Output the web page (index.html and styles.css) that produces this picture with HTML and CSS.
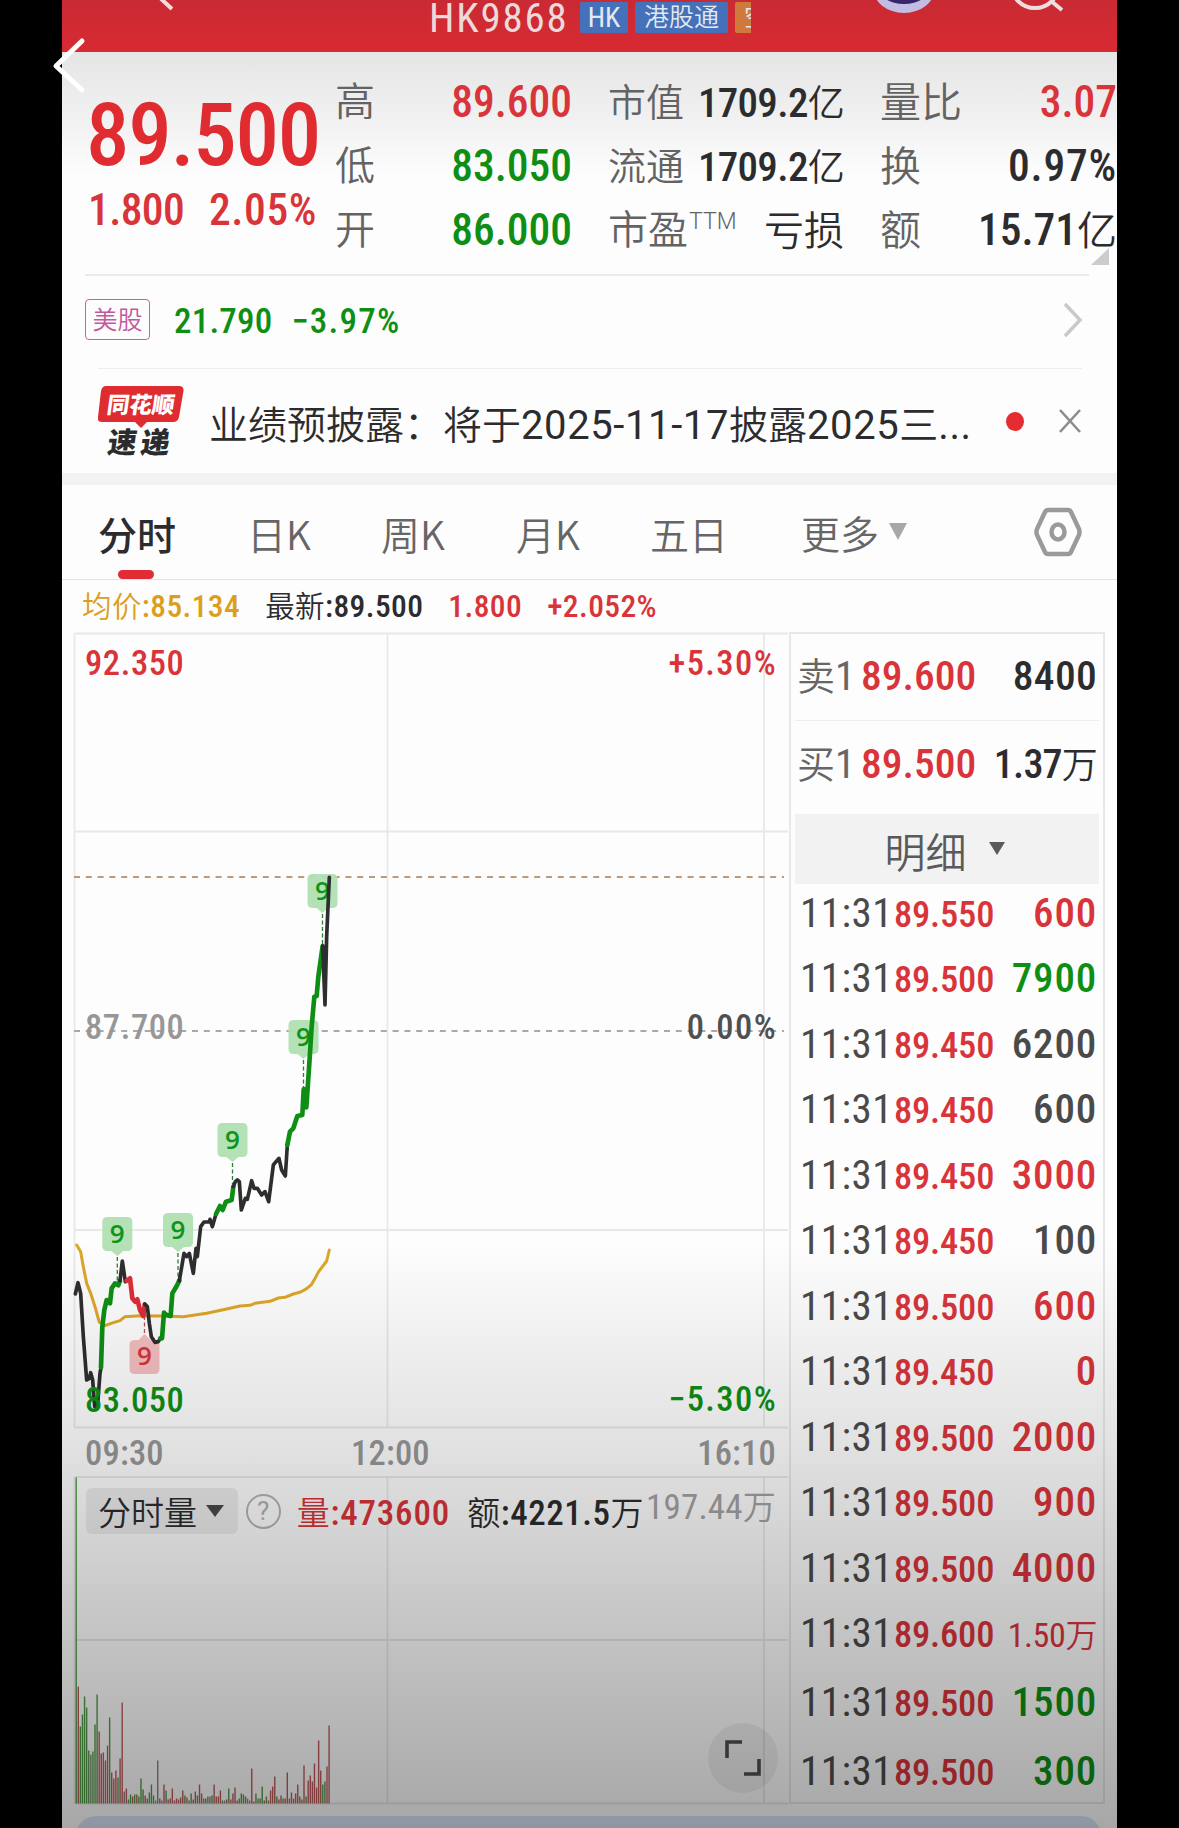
FILE: index.html
```html
<!DOCTYPE html>
<html lang="zh-CN">
<head>
    <meta charset="utf-8">
    <title>HK9868</title>
    <meta name="viewport" content="width=device-width, initial-scale=1.0">
    <link rel="stylesheet" href="styles.css">
</head>
<body>
    <svg class="page-back" width="44" height="60" viewBox="0 0 44 60"><path d="M34 6 L8 31 L34 55"/></svg>

    <div class="screen">
        <header>
            <svg class="nav-back" width="30" height="14" viewBox="0 0 30 14"><path d="M12 -4 L26 9"/></svg>
            <h1>HK9868</h1>
            <div class="tags">
                <span class="tag">HK</span>
                <span class="tag tag-connect">港股通</span>
                <span class="tag tag-short">空</span>
            </div>
            <svg class="nav-icons" width="200" height="16" viewBox="0 0 200 16">
                <ellipse cx="31" cy="-12" rx="31" ry="25" fill="#c3bde4"/>
                <ellipse cx="31" cy="-13" rx="26" ry="17" fill="#35276b"/>
                <circle cx="162" cy="-16" r="24" fill="none" stroke="#f0dede" stroke-width="4"/>
                <path d="M178 1 L189 10" stroke="#f0dede" stroke-width="4"/>
            </svg>
        </header>

        <div class="quote">
            <div class="price-block">
                <div class="price">89.500</div>
                <div class="change"><span>1.800</span><span class="pct">2.05%</span></div>
            </div>
            <div class="stats stats-range">
                <div class="stat"><span class="label">高</span><span class="num red">89.600</span></div>
                <div class="stat"><span class="label">低</span><span class="num green">83.050</span></div>
                <div class="stat"><span class="label">开</span><span class="num green">86.000</span></div>
            </div>
            <div class="stats stats-cap">
                <div class="stat"><span class="label small">市值</span><span class="num cap">1709.2<i>亿</i></span></div>
                <div class="stat"><span class="label small">流通</span><span class="num cap">1709.2<i>亿</i></span></div>
                <div class="stat"><span class="label">市盈<sup>TTM</sup></span><span class="num"><i>亏损</i></span></div>
            </div>
            <div class="stats stats-turnover">
                <div class="stat"><span class="label">量比</span><span class="num red">3.07</span></div>
                <div class="stat"><span class="label">换</span><span class="num pct">0.97%</span></div>
                <div class="stat"><span class="label">额</span><span class="num">15.71<i>亿</i></span></div>
            </div>
            <svg class="corner" width="18" height="17" viewBox="0 0 18 17"><path d="M18 0 V17 H0 Z"/></svg>
        </div>

        <div class="us-row">
            <span class="us-tag">美股</span>
            <span class="us-price">21.790</span>
            <span class="us-change">−3.97%</span>
            <svg class="us-arrow" width="20" height="40" viewBox="0 0 20 40"><path d="M2 4 L17 20 L2 36"/></svg>
        </div>

        <div class="news-row">
            <div class="news-logo">
                <svg width="88" height="44" viewBox="0 0 88 44"><path d="M8 0 H81 Q86 0 85.500 5 L81 31 Q80 36 75 36 H49 L43 42 L37 36 H4 Q-1 36 0 31 L3 5 Q4 0 8 0 Z"/></svg>
                <span class="logo-top">同花顺</span>
                <span class="logo-bottom">速递</span>
            </div>
            <div class="news-title">业绩预披露：将于<span>2025-11-17</span>披露<span>2025</span>三<span>...</span></div>
            <span class="dot"></span>
            <svg class="close" width="24" height="24" viewBox="0 0 24 24"><path d="M2 1 L22 23 M22 1 L2 23"/></svg>
        </div>

        <nav class="tabs">
            <span class="tab active">分时</span>
            <span class="tab">日K</span>
            <span class="tab">周K</span>
            <span class="tab">月K</span>
            <span class="tab">五日</span>
            <span class="tab more">更多<svg width="22" height="20" viewBox="0 0 22 20"><path d="M2 1 H20 L11 18 Z"/></svg></span>
            <svg class="settings" width="48" height="50" viewBox="0 0 48 50">
                <path d="M14 3 H34 Q36 3 37 5 L45 22 Q46 25 45 28 L37 45 Q36 47 34 47 H14 Q12 47 11 45 L3 28 Q2 25 3 22 L11 5 Q12 3 14 3 Z"/>
                <ellipse cx="24" cy="25" rx="6.500" ry="7.500"/>
            </svg>
        </nav>

        <div class="info-row">
            <span class="avg"><i>均价</i>:85.134</span>
            <span><i>最新</i>:89.500</span>
            <span class="red">1.800</span>
            <span class="red">+2.052%</span>
        </div>

        <div class="main">
            <div class="charts">
                <svg id="chart" width="727" height="1185" viewBox="62 630 727 1185">
                    <g class="grid">
                        <path d="M74.500 633.500 H788 M74.500 831.500 H788 M74.500 1230 H788 M74.500 1427.500 H788 M74.500 1477 H788 M74.500 1640 H788 M74.500 1803.500 H788"/>
                        <path d="M74.500 633 V1428 M387.500 633 V1428 M764 633 V1428 M387.500 1477 V1803 M764 1477 V1803 M74.500 1477 V1803"/>
                    </g>
                    <path class="last-line" d="M74 877 H784"/>
                    <path class="zero-line" d="M74 1031 H784"/>

                    <g class="marks" id="marks"></g>

                    <g class="lines" transform="translate(60 1160) scale(.33333)">
                        <polyline class="avg-line" points="50,255 62,275 70,320 80,370 92,400 105,440 118,487 135,497 160,488 180,482 195,470 240,467 300,468 370,470 400,466 440,460 500,447 540,438 570,436 585,430 630,424 655,414 675,412 700,402 722,396 740,386 755,373 768,350 776,335 800,303 808,270"/>
                        <polyline points="46,402 54,368 62,400 70,530 80,660 88,655 92,638 98,660 104,740 112,745 120,640 123,622"/>
                        <polyline class="up" points="123,622 127,500 133,450 140,420 150,430 155,385 165,370 175,376 180,362"/>
                        <polyline points="180,362 187,303 196,365 200,362"/>
                        <polyline class="down" points="200,362 210,355 217,415 225,425 232,418 240,450 250,468 254,434"/>
                        <polyline points="254,432 262,440 268,490 274,530 285,547 295,545 301,535"/>
                        <polyline class="up" points="301,535 306,535 312,458 320,465 332,468 337,400 350,378 358,362"/>
                        <polyline points="358,362 372,280 380,290 388,280 400,340 408,265 412,290 422,200 432,186 447,186 450,178 457,200 468,162"/>
                        <polyline class="up" points="468,162 480,138 488,150 498,125 515,120 520,80"/>
                        <polyline points="520,80 526,65 532,60 538,65 544,150 556,115 562,118 575,62 582,85 592,85 605,105 615,95 626,125 640,15 648,5 657,-5 665,30 676,48 682,-45"/>
                        <polyline class="up" points="682,-45 690,-85 700,-95 712,-132 727,-135 731,-212 736,-212 739,-158 748,-290 755,-400 763,-490 770,-492 775,-550 788,-642"/>
                        <polyline points="788,-642 795,-465 800,-670 808,-848"/>
                    </g>
                    <g id="volume"></g>

                    <g class="labels">
                        <text class="red" x="85" y="674.500">92.350</text>
                        <text class="red pct" x="777" y="674.500" text-anchor="end">+5.30%</text>
                        <text class="mid" x="85" y="1039">87.700</text>
                        <text class="dark pct" x="777" y="1039" text-anchor="end">0.00%</text>
                        <text class="green" x="85" y="1412">83.050</text>
                        <text class="green pct" x="777" y="1411" text-anchor="end">−5.30%</text>
                        <text class="time" x="85" y="1465">09:30</text>
                        <text class="time" x="351" y="1465">12:00</text>
                        <text class="time" x="776" y="1465" text-anchor="end">16:10</text>
                    </g>
                </svg>
                <div class="vol-bar">
                    <span class="vol-select"><i>分时量</i><svg width="20" height="14" viewBox="0 0 20 14"><path d="M1 1 H19 L10 13 Z"/></svg></span>
                    <span class="help">?</span>
                    <span class="red vol"><i>量</i>:473600</span>
                    <span class="amount"><i>额</i>:4221.5<i>万</i></span>
                    <span class="vol-max">197.44<i>万</i></span>
                </div>
                <div class="expand"><svg width="36" height="36" viewBox="0 0 36 36"><path d="M2 18 V2 H17 M34 19 V34 H19"/></svg></div>
            </div>

            <div class="book">
                <div class="book-row"><span class="side">卖<b>1</b></span><span class="book-price">89.600</span><span class="book-qty">8400</span></div>
                <div class="book-row"><span class="side">买<b>1</b></span><span class="book-price">89.500</span><span class="book-qty wan">1.37<i>万</i></span></div>
                <div class="detail-head">明细<svg width="16" height="13" viewBox="0 0 16 13"><path d="M0 0 H16 L8 13 Z"/></svg></div>
                <div class="ticks" id="ticks"></div>
            </div>
        </div>

        <div class="bottom-bar"></div>
        <div class="shade"></div>
    </div>

    <script>
        // price, quantity, direction
        const ticks = [
            ['89.550', '600', 'red'],
            ['89.500', '7900', 'green'],
            ['89.450', '6200', ''],
            ['89.450', '600', ''],
            ['89.450', '3000', 'red'],
            ['89.450', '100', ''],
            ['89.500', '600', 'red'],
            ['89.450', '0', 'red'],
            ['89.500', '2000', 'red'],
            ['89.500', '900', 'red'],
            ['89.500', '4000', 'red'],
            ['89.600', '1.50<i>万</i>', 'red small'],
            ['89.500', '1500', 'green'],
            ['89.500', '300', 'green']
        ];
        document.getElementById('ticks').innerHTML = ticks.map(t =>
            `<div class="tick"><span class="tick-time">11:31</span><span class="tick-price">${t[0]}</span><span class="tick-qty ${t[2]}">${t[1]}</span></div>`
        ).join('');

        // Signal marks: x, top of the box, end of the stem
        const marks = [
            [117.3, 1217, 1281], [178, 1213, 1282], [232.500, 1123, 1184],
            [303.500, 1020, 1090], [322.500, 874, 945]
        ];
        let markHtml = marks.map(([x, y, end]) => `
            <path class="stem" d="M${x} ${y + 40} V${end}"/>
            <path class="mark" d="M${x - 10} ${y} h20 q5 0 5 5 v24 q0 5 -5 5 h-4 l-6 5 l-6 -5 h-4 q-5 0 -5 -5 v-24 q0 -5 5 -5 z"/>
            <text x="${x}" y="${y + 26}">9</text>`).join('');
        markHtml += `
            <path class="stem down" d="M144.500 1316 V1336"/>
            <path class="mark down" d="M134.500 1340 h4 l6 -6 l6 6 h4 q5 0 5 5 v24 q0 5 -5 5 h-20 q-5 0 -5 -5 v-24 q0 -5 5 -5 z"/>
            <text class="down" x="144.500" y="1365">9</text>`;
        document.getElementById('marks').innerHTML = markHtml;

        // Volume per minute, g = sell, r = buy, n = flat
        const volume = '326g 117r 77g 89g 107g 96g 53g 49n 52g 79g 109g 72r 50r 51r 43r 58r 86g 31r 25r 33r 26g 45r 101r 12n 15r 4g 9g 7r 9g 9r 7g 25g 14g 8r 5g 11g 19g 8g 3n 43n 5r 3n 19r 13g 4r 5r 15r 3r 5r 4r 6r 13r 8g 6r 3n 10g 4r 12r 8g 19r 10r 5n 5g 7n 7n 8g 19r 7r 7r 13r 3g 3n 4r 15g 4r 10r 16r 3r 5g 10g 9g 7r 5n 3n 35r 2r 10g 5n 5g 17g 3r 7g 3r 13r 17r 27r 7g 4r 8r 5g 5r 31r 5r 11r 5r 10r 19r 7g 4r 38r 7g 23r 28r 22r 40r 16r 63r 33r 19g 22g 37r 78r';
        document.getElementById('volume').innerHTML = volume.split(' ').map((v, i) => {
            const h = parseInt(v);
            return `<rect class="v${v.slice(-1)}" x="${(75.500 + i * 2.09).toFixed(2)}" y="${1803.500 - h}" width="1.4" height="${h}"/>`;
        }).join('');
    </script>
</body>
</html>
```
FILE: styles.css
```css
* {
    box-sizing: border-box;
}
body {
    margin: 0;
    background-color: #000;
    font-family: "Roboto Condensed", Roboto, "Noto Sans CJK SC", sans-serif;
    color: #2c2c2e;
    height: 1828px;
    overflow: hidden;
    position: relative;
}
i, b, sup {
    font-style: normal;
    font-weight: 350;
}
svg {
    display: block;
    flex: none;
}
.red {
    color: #d9343a;
    fill: #d9343a;
}
.green {
    color: #0e8f14;
    fill: #0e8f14;
}
.page-back {
    position: absolute;
    left: 48px;
    top: 35px;
    z-index: 5;
}
.page-back path {
    fill: none;
    stroke: #fff;
    stroke-width: 5;
    stroke-linecap: round;
    stroke-linejoin: round;
}
.screen {
    position: relative;
    width: 1055px;
    height: 1828px;
    margin-left: 62px;
    background-color: #fdfdfd;
    overflow: hidden;
}

/* header */
header {
    height: 52px;
    background: linear-gradient(#c92a33, #d92a33);
    display: flex;
    align-items: flex-start;
}
.nav-back {
    margin-left: 84px;
}
.nav-back path {
    fill: none;
    stroke: #f0dede;
    stroke-width: 4;
}
h1 {
    margin: 0 0 0 253px;
    width: 151px;
    font-size: 41px;
    line-height: 36px;
    font-weight: 400;
    letter-spacing: 1.8px;
    color: #ecd9d9;
    white-space: nowrap;
}
.tags {
    display: flex;
    gap: 7px;
    width: 171px;
    margin-top: 2px;
    overflow: hidden;
}
.tag {
    flex: none;
    height: 31px;
    line-height: 31px;
    border-radius: 2px;
    background-color: #4471b9;
    color: #e3e9f0;
    font-size: 25px;
    font-weight: 350;
    width: 48px;
    text-align: center;
}
.tag:first-child {
    font-size: 28px;
    font-weight: 400;
}
.tag-connect {
    width: 93px;
}
.tag-short {
    background-color: #cf7a3c;
    padding-left: 9px;
    text-align: left;
}
.nav-icons {
    margin-left: 122px;
}

/* quote */
.quote {
    position: relative;
    height: 224px;
    display: flex;
    padding-left: 25px;
    background: linear-gradient(#e5e5e5, #f3f3f3 35%, #fdfdfd 55%);
}
.quote:after {
    content: "";
    position: absolute;
    left: 23px;
    right: 28px;
    bottom: 0;
    height: 2px;
    background-color: #ebebeb;
}
.price-block {
    width: 248px;
    color: #e02c31;
}
.price {
    font-size: 87px;
    font-weight: 500;
    line-height: 102px;
    margin: 32px 0 0 -1px;
    white-space: nowrap;
    letter-spacing: -1.3px;
}
.change {
    display: flex;
    justify-content: space-between;
    width: 230px;
    padding-left: 1px;
    font-size: 43.500px;
    line-height: 50px;
    font-weight: 500;
    letter-spacing: -0.6px;
    color: #d9343a;
}
.change .pct {
    letter-spacing: 0.6px;
}
.stats {
    margin-top: 19px;
}
.stats-range {
    width: 237px;
}
.stats-cap {
    width: 236px;
    margin-left: 36px;
}
.stats-turnover {
    width: 237px;
    margin-left: 36px;
}
.stat {
    display: flex;
    justify-content: space-between;
    height: 64px;
    line-height: 64px;
    white-space: nowrap;
}
.label {
    color: #636363;
    font-size: 40px;
    font-weight: 350;
}
.stats-turnover .label {
    font-size: 41px;
}
.label.small {
    font-size: 38px;
}
.label sup {
    font-family: Roboto, sans-serif;
    font-size: 23px;
    line-height: 0;
    vertical-align: 15px;
    margin-left: 1px;
}
.num {
    font-size: 43.500px;
    font-weight: 500;
}
.num.pct {
    letter-spacing: 0.8px;
}
.num i {
    font-size: 40px;
}
.num.cap {
    font-size: 41px;
    letter-spacing: -0.7px;
}
.num.cap i {
    font-size: 37px;
}
.corner {
    position: absolute;
    right: 8px;
    bottom: 11px;
    fill: #ccc;
}

/* us stock */
.us-row {
    height: 92px;
    display: flex;
    align-items: center;
    margin: 0 36px 0 23px;
    color: #0e8f14;
    font-size: 35px;
    font-weight: 500;
}
.us-tag {
    width: 65px;
    height: 41px;
    line-height: 42px;
    margin-top: -5px;
    border: 1.500px solid #bb6a98;
    border-radius: 4px;
    text-align: center;
    color: #c4589c;
    font-size: 25px;
    font-weight: 350;
}
.us-price {
    margin: -2px 0 0 24px;
    letter-spacing: 0.2px;
}
.us-change {
    margin: -2px 0 0 19px;
    letter-spacing: 1.2px;
}
.us-arrow {
    margin: -5px -2px 0 auto;
}
.us-arrow path {
    fill: none;
    stroke: #c9c9c9;
    stroke-width: 3.500;
}

/* news */
.news-row {
    height: 105px;
    margin-left: 36px;
    width: 984px;
    border-top: 1.500px solid #eee;
    display: flex;
    align-items: center;
}
.news-logo {
    position: relative;
    width: 88px;
    height: 70px;
    flex: none;
    fill: #df2c31;
}
.logo-top, .logo-bottom {
    position: absolute;
    font-weight: 900;
    line-height: 30px;
    transform: skewX(-8deg);
    white-space: nowrap;
}
.logo-top {
    left: 9px;
    top: 4px;
    font-size: 22.500px;
    color: #fff;
}
.logo-bottom {
    left: 10px;
    top: 42px;
    font-size: 29px;
    letter-spacing: 4px;
}
.news-title {
    width: 766px;
    margin: 9px 0 0 23px;
    font-size: 39px;
    font-weight: 350;
    line-height: 50px;
    white-space: nowrap;
}
.news-title span {
    font-family: Roboto, sans-serif;
    font-size: 40px;
    font-weight: 400;
    letter-spacing: 0.6px;
}
.dot {
    width: 18px;
    height: 19px;
    border-radius: 50%;
    background-color: #e42c31;
    margin-left: 34px;
    flex: none;
}
.close {
    margin-left: 34px;
}
.close path {
    stroke: #8c8c8c;
    stroke-width: 2.600;
}

/* tabs */
.tabs {
    height: 107px;
    border-top: 12px solid #f2f2f2;
    border-bottom: 1.500px solid #e4e4e4;
    display: flex;
    align-items: center;
    padding-left: 36px;
    color: #666;
    font-size: 39px;
    font-weight: 350;
    position: relative;
}
.tab {
    width: 133px;
    padding-left: 15px;
    white-space: nowrap;
    height: 94px;
    line-height: 96px;
    font-family: "Noto Sans CJK SC", sans-serif;
}
.tab.active {
    width: 134px;
    padding-left: 0;
    color: #2c2c2e;
    font-weight: 500;
    position: relative;
}
.tab.active:after {
    content: "";
    position: absolute;
    left: 20px;
    bottom: 0;
    width: 36px;
    height: 9px;
    border-radius: 5px;
    background-color: #e02c35;
}
.tab:nth-child(3) {
    padding-left: 16px;
}
.tab:nth-child(4) {
    padding-left: 18px;
}
.tab:nth-child(5) {
    padding-left: 19px;
}
.tab.more {
    display: flex;
    width: 195px;
    padding-left: 37px;
    align-items: center;
    line-height: 94px;
}
.more svg {
    margin: 0 0 0 8px;
    fill: #a8a8a8;
}
.settings {
    position: absolute;
    left: 972px;
    top: 22px;
    fill: none;
    stroke: #9a9a9a;
    stroke-width: 4.500;
}

/* info line */
.info-row {
    height: 50px;
    display: flex;
    align-items: baseline;
    gap: 25px;
    padding: 4px 0 0 20px;
    font-size: 31.500px;
    font-weight: 500;
    letter-spacing: 0.4px;
    line-height: 46px;
    white-space: nowrap;
}
.info-row i {
    font-size: 29.500px;
}
.avg {
    color: #dc9f1c;
}

/* charts */
.main {
    display: flex;
    height: 1185px;
}
.charts {
    position: relative;
    width: 727px;
}
.grid path {
    fill: none;
    stroke: #e8e8e8;
    stroke-width: 1.800;
}
.last-line {
    stroke: #c09a78;
    stroke-width: 1.800;
    stroke-dasharray: 6 5.800;
}
.zero-line {
    stroke: #a9a9a9;
    stroke-width: 1.800;
    stroke-dasharray: 6 5.800;
}
.lines polyline {
    fill: none;
    stroke: #2e2e30;
    stroke-width: 11;
    stroke-linejoin: round;
    stroke-linecap: round;
}
.lines .avg-line {
    stroke: #dca628;
    stroke-width: 9;
}
.lines .up {
    stroke: #0e8f14;
    stroke-width: 14;
}
.lines .down {
    stroke: #df2c38;
    stroke-width: 14;
}
.stem {
    stroke: #2f7d35;
    stroke-width: 1.300;
    stroke-dasharray: 4 2.500;
}
.mark {
    fill: #b1dfb3;
    fill-opacity: 0.95;
}
.marks text {
    font: 600 26px "Open Sans", sans-serif;
    fill: #0e9518;
    text-anchor: middle;
}
.stem.down {
    stroke: #c2525a;
}
.mark.down {
    fill: #f3babd;
}
.marks text.down {
    fill: #d9343a;
}
.labels text {
    font-size: 34.500px;
    font-weight: 500;
    letter-spacing: 0.6px;
}
.labels text.pct {
    letter-spacing: 1.4px;
}
.labels text.time {
    letter-spacing: 0.2px;
}
.labels .mid, .labels .time {
    fill: #979797;
}
.labels .dark {
    fill: #505050;
}
.vg {
    fill: #4f9a45;
}
.vr {
    fill: #bd5a5c;
}
.vn {
    fill: #8a7f7f;
}
.vol-bar {
    position: absolute;
    left: 24px;
    top: 858px;
    width: 690px;
    height: 46px;
    display: flex;
    align-items: center;
    font-size: 35px;
    font-weight: 500;
    white-space: nowrap;
}
.vol-bar i {
    font-size: 33px;
}
.vol-select {
    width: 152px;
    height: 46px;
    padding-left: 12px;
    display: flex;
    align-items: center;
    gap: 8px;
    border-radius: 6px;
    background-color: #ececec;
    fill: #4a4a4a;
}
.help {
    width: 35px;
    height: 35px;
    line-height: 31px;
    margin-left: 8px;
    border: 2.500px solid #b4b4b4;
    border-radius: 50%;
    text-align: center;
    font-family: Roboto, sans-serif;
    font-size: 26px;
    font-weight: 400;
    color: #b0b0b0;
}
.vol {
    margin: -1px 0 0 16px;
    width: 155px;
    letter-spacing: 0.8px;
}
.amount {
    margin: -1px 0 0 16px;
    width: 179px;
    letter-spacing: 0.5px;
}
.vol-max {
    color: #a2a2a2;
    font-weight: 400;
    letter-spacing: 0.2px;
    margin-top: -12px;
}
.expand {
    position: absolute;
    left: 646px;
    top: 1093px;
    width: 70px;
    height: 70px;
    border-radius: 50%;
    background-color: rgba(0, 0, 0, 0.06);
    display: flex;
    align-items: center;
    justify-content: center;
}
.expand path {
    fill: none;
    stroke: #4e4e4e;
    stroke-width: 3.600;
}

/* order book */
.book {
    width: 316px;
    height: 1172px;
    margin-top: 2px;
    border: 2px solid #e8e8e8;
    padding: 0 4px;
}
.book-row {
    display: flex;
    align-items: baseline;
    height: 87px;
    line-height: 84px;
    padding: 0 2px;
    white-space: nowrap;
    font-size: 41.500px;
    font-weight: 500;
}
.book-row:first-child {
    border-bottom: 1.500px solid #eee;
}
.book-row:nth-child(2) {
    height: 93px;
    line-height: 86px;
}
.side {
    width: 64px;
    color: #666;
    font-size: 38px;
    font-weight: 350;
}
.side b {
    font-size: 41px;
    font-weight: 400;
}
.book-price {
    color: #d9343a;
}
.book-qty {
    margin-left: auto;
    letter-spacing: 0.3px;
}
.book-qty.wan {
    font-size: 40px;
    letter-spacing: -0.8px;
}
.book-qty i {
    font-size: 36px;
}
.detail-head {
    height: 70px;
    background-color: #f2f2f2;
    color: #5a5a5a;
    font-size: 41px;
    font-weight: 350;
    display: flex;
    align-items: center;
    justify-content: center;
    gap: 22px;
    padding: 2px 5px 0 0;
    fill: #5a5a5a;
}
.detail-head svg {
    margin-top: -3px;
}
.ticks {
    margin-top: -4px;
}
.tick {
    display: flex;
    align-items: center;
    height: 65.500px;
    padding: 0 2px 0 5px;
    font-size: 41px;
    font-weight: 400;
    color: #4a4a4a;
    white-space: nowrap;
}
.tick:nth-child(n+13) {
    height: 69px;
    padding-top: 3px;
}
.tick-time {
    width: 94px;
    letter-spacing: 0.5px;
}
.tick-price {
    font-size: 36.500px;
    color: #d9343a;
    font-weight: 500;
    padding-top: 3px;
    letter-spacing: -0.2px;
}
.tick-qty {
    margin-left: auto;
    font-weight: 500;
    letter-spacing: 0.8px;
}
.tick-qty.small {
    font-size: 34px;
    font-weight: 400;
    letter-spacing: -0.4px;
}
.tick-qty i {
    font-size: 32px;
}

.bottom-bar {
    position: absolute;
    left: 14px;
    right: 16px;
    top: 1816px;
    height: 40px;
    border-radius: 20px;
    background-color: #d6e4f4;
}
.shade {
    position: absolute;
    left: 0;
    right: 0;
    top: 1240px;
    bottom: 0;
    background: linear-gradient(rgba(0, 0, 0, 0), rgba(0, 0, 0, 0.11) 35%, rgba(0, 0, 0, 0.23) 68%, rgba(0, 0, 0, 0.34));
}
```
